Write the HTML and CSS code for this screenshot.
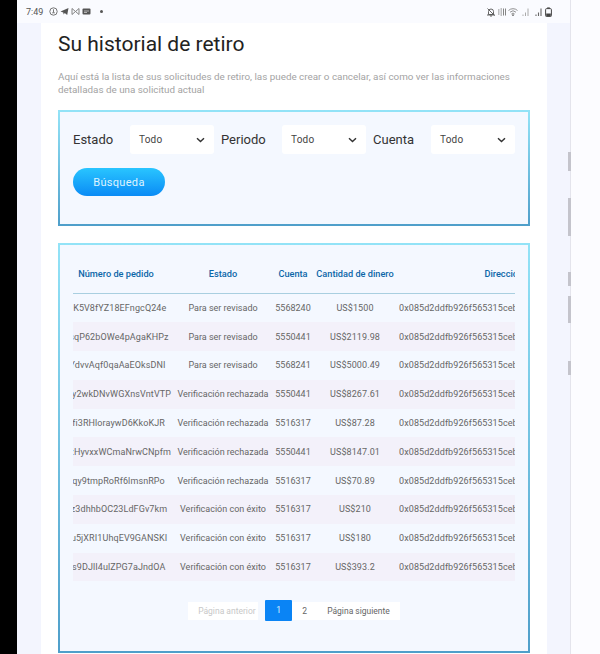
FILE: index.html
```html
<!DOCTYPE html>
<html lang="es">
<head>
  <meta charset="UTF-8">
  <meta name="viewport" content="width=device-width, initial-scale=1.0">
  <title>Su historial de retiro</title>
  <link rel="stylesheet" href="styles.css">
</head>
<body>
  <div class="phone">
    <div class="statusbar">
      <div class="status-left">
        <span class="clock">7:49</span>
        <svg class="ico" width="9" height="9" viewBox="0 0 9 9"><circle cx="4.5" cy="4.5" r="3.7" fill="none" stroke="#666" stroke-width="0.9"/><path d="M4.5 2.3v3.2M3.2 5.8h2.6" stroke="#666" stroke-width="0.9" fill="none"/></svg>
        <svg class="ico" width="9" height="9" viewBox="0 0 9 9"><path d="M0.5 4.5 8.5 1 7.2 8 4.8 6 3.6 7.5 3.3 5.4z" fill="#555"/></svg>
        <svg class="ico" width="9" height="9" viewBox="0 0 9 9"><path d="M1 1.5v6l3.5-3zM8 1.5v6l-3.5-3z" fill="none" stroke="#777" stroke-width="0.9"/></svg>
        <svg class="ico" width="9" height="9" viewBox="0 0 9 9"><rect x="0.5" y="1.5" width="8" height="6" rx="1" fill="#555"/><path d="M2 4h5M2 5.5h3" stroke="#ddd" stroke-width="0.7"/></svg>
        <span class="dot"></span>
      </div>
      <div class="status-right">
        <svg width="10" height="10" viewBox="0 0 10 10"><path d="M2.5 7.5V4.5a2.5 2.5 0 0 1 5 0v3zM1 8h8M1.5 1.5l7 7M4 9h2" fill="none" stroke="#555" stroke-width="0.9"/></svg>
        <svg width="10" height="10" viewBox="0 0 10 10"><path d="M1 3h1.5M1 5h1.5M1 7h1.5M3.5 2h1.5M3.5 4h1.5M3.5 6h1.5M3.5 8h1.5M6.5 1.5v7M8.5 1.5v7" stroke="#777" stroke-width="0.9"/></svg>
        <svg width="10" height="10" viewBox="0 0 10 10"><path d="M0.5 3.5a6.5 6.5 0 0 1 9 0M2 5.2a4.3 4.3 0 0 1 6 0M3.5 6.8a2.2 2.2 0 0 1 3 0M5 9l-1-1.2h2z" fill="none" stroke="#777" stroke-width="0.8"/></svg>
        <svg class="signal" width="9" height="10" viewBox="0 0 9 10"><path d="M1 9V7.5M3.5 9V5.5M6 9V1.5" stroke="#aaa" stroke-width="1"/></svg>
        <svg class="signal" width="9" height="10" viewBox="0 0 9 10"><path d="M1 9V7.5M3.5 9V5.5M6 9V1.5" stroke="#666" stroke-width="1.1"/></svg>
        <svg width="7" height="10" viewBox="0 0 7 10"><rect x="0.6" y="1.6" width="5.8" height="8" rx="1" fill="none" stroke="#444" stroke-width="1"/><rect x="2.2" y="0.4" width="2.6" height="1.2" fill="#444"/><rect x="1.2" y="6.5" width="4.6" height="2.6" fill="#444"/></svg>
      </div>
    </div>

    <div class="page">
      <div class="card">
        <h1>Su historial de retiro</h1>
        <p class="intro">Aquí está la lista de sus solicitudes de retiro, las puede crear o cancelar, así como ver las informaciones detalladas de una solicitud actual</p>

        <div class="panel panel-filter">
          <div class="filters">
            <label class="filter-label label-estado">Estado</label>
            <div class="select">Todo<svg class="chev" width="9" height="6" viewBox="0 0 9 6"><path d="M1 1.3 4.5 4.5 8 1.3" fill="none" stroke="#333" stroke-width="1.5"/></svg></div>
            <label class="filter-label label-periodo">Periodo</label>
            <div class="select">Todo<svg class="chev" width="9" height="6" viewBox="0 0 9 6"><path d="M1 1.3 4.5 4.5 8 1.3" fill="none" stroke="#333" stroke-width="1.5"/></svg></div>
            <label class="filter-label label-cuenta">Cuenta</label>
            <div class="select">Todo<svg class="chev" width="9" height="6" viewBox="0 0 9 6"><path d="M1 1.3 4.5 4.5 8 1.3" fill="none" stroke="#333" stroke-width="1.5"/></svg></div>
          </div>
          <button class="search-btn">Búsqueda</button>
        </div>

        <div class="panel panel-table">
          <div class="table-wrap">
            <table class="orders">
              <thead>
                <tr><th>Número de pedido</th><th>Estado</th><th>Cuenta</th><th>Cantidad de dinero</th><th>Dirección de retiro</th></tr>
              </thead>
              <tbody>
                <tr><td>qiK5V8fYZ18EFngcQ24e</td><td>Para ser revisado</td><td>5568240</td><td>US$1500</td><td>0x085d2ddfb926f565315ceb7a1c4d9e02</td></tr>
                <tr><td>XsqP62bOWe4pAgaKHPz</td><td>Para ser revisado</td><td>5550441</td><td>US$2119.98</td><td>0x085d2ddfb926f565315ceb7a1c4d9e02</td></tr>
                <tr><td>rYdvvAqf0qaAaEOksDNI</td><td>Para ser revisado</td><td>5568241</td><td>US$5000.49</td><td>0x085d2ddfb926f565315ceb7a1c4d9e02</td></tr>
                <tr><td>Any2wkDNvWGXnsVntVTP</td><td>Verificación rechazada</td><td>5550441</td><td>US$8267.61</td><td>0x085d2ddfb926f565315ceb7a1c4d9e02</td></tr>
                <tr><td>bfi3RHloraywD6KkoKJR</td><td>Verificación rechazada</td><td>5516317</td><td>US$87.28</td><td>0x085d2ddfb926f565315ceb7a1c4d9e02</td></tr>
                <tr><td>EtzHyvxxWCmaNrwCNpfm</td><td>Verificación rechazada</td><td>5550441</td><td>US$8147.01</td><td>0x085d2ddfb926f565315ceb7a1c4d9e02</td></tr>
                <tr><td>Eqy9tmpRoRf6lmsnRPo</td><td>Verificación rechazada</td><td>5516317</td><td>US$70.89</td><td>0x085d2ddfb926f565315ceb7a1c4d9e02</td></tr>
                <tr><td>Cz3dhhbOC23LdFGv7km</td><td>Verificación con éxito</td><td>5516317</td><td>US$210</td><td>0x085d2ddfb926f565315ceb7a1c4d9e02</td></tr>
                <tr><td>Gu5jXRI1UhqEV9GANSKI</td><td>Verificación con éxito</td><td>5516317</td><td>US$180</td><td>0x085d2ddfb926f565315ceb7a1c4d9e02</td></tr>
                <tr><td>Zs9DJlI4ulZPG7aJndOA</td><td>Verificación con éxito</td><td>5516317</td><td>US$393.2</td><td>0x085d2ddfb926f565315ceb7a1c4d9e02</td></tr>
              </tbody>
            </table>
          </div>
          <div class="pager">
            <span class="pg pg-prev">Página anterior</span>
            <span class="pg pg-num pg-on">1</span>
            <span class="pg pg-num">2</span>
            <span class="pg">Página siguiente</span>
          </div>
        </div>
      </div>
    </div>
  </div>
  <div class="side"></div>
  <div class="scrollmarks">
    <span class="mark mark-a"></span>
    <span class="mark mark-b"></span>
    <span class="mark mark-c"></span>
    <span class="mark mark-d"></span>
    <span class="mark mark-e"></span>
  </div>
</body>
</html>
```

FILE: styles.css
```css
html, body {
  height: 100%;
}
body {
  margin: 0;
  padding-left: 17px;
  background: #000;
  display: flex;
  overflow: hidden;
  font-family: Roboto, "Liberation Sans", sans-serif;
  color: #333;
}
.phone {
  width: 553px;
  flex: none;
  background: #f3f5fe;
  overflow: hidden;
}
.side {
  flex: 1;
  background: #fcfcff;
  border-left: 1px solid #e4e4ec;
}
.statusbar {
  height: 23px;
  background: #fafbff;
  display: flex;
  justify-content: space-between;
  align-items: center;
  padding: 0 18px 0 9px;
  box-sizing: border-box;
}
.status-left {
  display: flex;
  align-items: center;
  gap: 2px;
}
.status-right {
  display: flex;
  align-items: center;
  gap: 1px;
}
.status-right .signal {
  margin-left: 3px;
}
.clock {
  font-size: 9px;
  color: #555;
  margin-right: 4px;
}
.dot {
  width: 3px;
  height: 3px;
  border-radius: 50%;
  background: #555;
  margin-left: 7px;
}
.page {
  padding: 0 23px 0 24px;
}
.card {
  background: #fff;
  padding: 1px 17px 0;
  height: 640px;
}
h1 {
  margin: 7px 0 0;
  font-size: 21px;
  font-weight: 400;
  line-height: 26px;
  color: #222;
}
.intro {
  margin: 13px 0 0;
  font-size: 9.85px;
  line-height: 13px;
  color: #a3a3a3;
}
.panel {
  border: 2px solid;
  border-image: linear-gradient(180deg, #93e3f7, #4f9fca) 1;
  background: #f4f8ff;
  box-sizing: border-box;
}
.panel-filter {
  margin-top: 14px;
  height: 116px;
  padding: 13px 13px 0;
}
.filters {
  display: flex;
  align-items: center;
}
.filter-label {
  flex: none;
  font-size: 13px;
  color: #333;
}
.label-estado { width: 57px; }
.label-periodo { width: 61px; }
.label-cuenta { width: 58px; }
.select {
  flex: none;
  width: 84px;
  height: 29px;
  box-sizing: border-box;
  background: #fff;
  border-radius: 3px;
  padding: 0 9px 0 9px;
  margin-right: 7px;
  display: flex;
  align-items: center;
  justify-content: space-between;
  font-size: 10px;
  letter-spacing: 0.2px;
  color: #444;
}
.select:last-child {
  margin-right: 0;
}
.search-btn {
  display: block;
  margin-top: 14px;
  width: 92px;
  height: 28px;
  border: none;
  border-radius: 14px;
  background: linear-gradient(180deg, #29c5ff, #0a8bf5);
  color: #dff3ff;
  font-family: inherit;
  font-size: 11px;
  letter-spacing: 0.3px;
}
.panel-table {
  margin-top: 17px;
  height: 410px;
  padding: 9px 13px 0;
}
.table-wrap {
  overflow: hidden;
}
.orders {
  border-collapse: collapse;
  table-layout: fixed;
  width: 586px;
  margin-left: -13px;
  font-size: 9px;
}
.orders th {
  height: 39px;
  padding: 0;
  font-size: 9.2px;
  font-weight: 500;
  color: #0b66a8;
  border-bottom: 1px solid #a9cfe0;
  white-space: nowrap;
}
.orders th:nth-child(1), .orders td:nth-child(1) { width: 112px; }
.orders th:nth-child(2), .orders td:nth-child(2) { width: 102px; }
.orders th:nth-child(3), .orders td:nth-child(3) { width: 38px; }
.orders th:nth-child(4), .orders td:nth-child(4) { width: 86px; }
.orders td {
  height: 28.8px;
  padding: 0;
  text-align: center;
  color: #666;
  white-space: nowrap;
  box-sizing: border-box;
}
.orders td:nth-child(1) {
  letter-spacing: 0.1px;
}
.orders td:nth-child(4) {
  letter-spacing: 0.1px;
}
.orders td:nth-child(5) {
  text-align: left;
  padding-left: 1px;
  letter-spacing: 0.1px;
}
.orders tbody tr:nth-child(even) {
  background: #f3f1fa;
}
.pager {
  display: flex;
  justify-content: center;
  align-items: center;
  margin-top: 19px;
}
.pg {
  background: #fff;
  height: 18px;
  line-height: 18px;
  padding: 0 10px;
  font-size: 8.5px;
  color: #666;
  white-space: nowrap;
}
.pg-prev {
  width: 70px;
  box-sizing: border-box;
  padding-right: 0;
  margin-right: 7px;
  color: #c8c8c8;
}
.pg-num {
  width: 25px;
  padding: 0;
  text-align: center;
}
.pg-on {
  width: 27px;
  height: 21px;
  line-height: 21px;
  background: #0a84f5;
  color: #dff3ff;
  border-radius: 1px;
}
.scrollmarks {
  position: absolute;
  left: 568px;
  top: 0;
}
.mark {
  position: absolute;
  left: 0;
  width: 3px;
  background: #c4c4cc;
}
.mark-a { top: 152px; height: 19px; }
.mark-b { top: 198px; height: 38px; }
.mark-c { top: 272px; height: 14px; }
.mark-d { top: 296px; height: 27px; }
.mark-e { top: 361px; height: 14px; }
```
